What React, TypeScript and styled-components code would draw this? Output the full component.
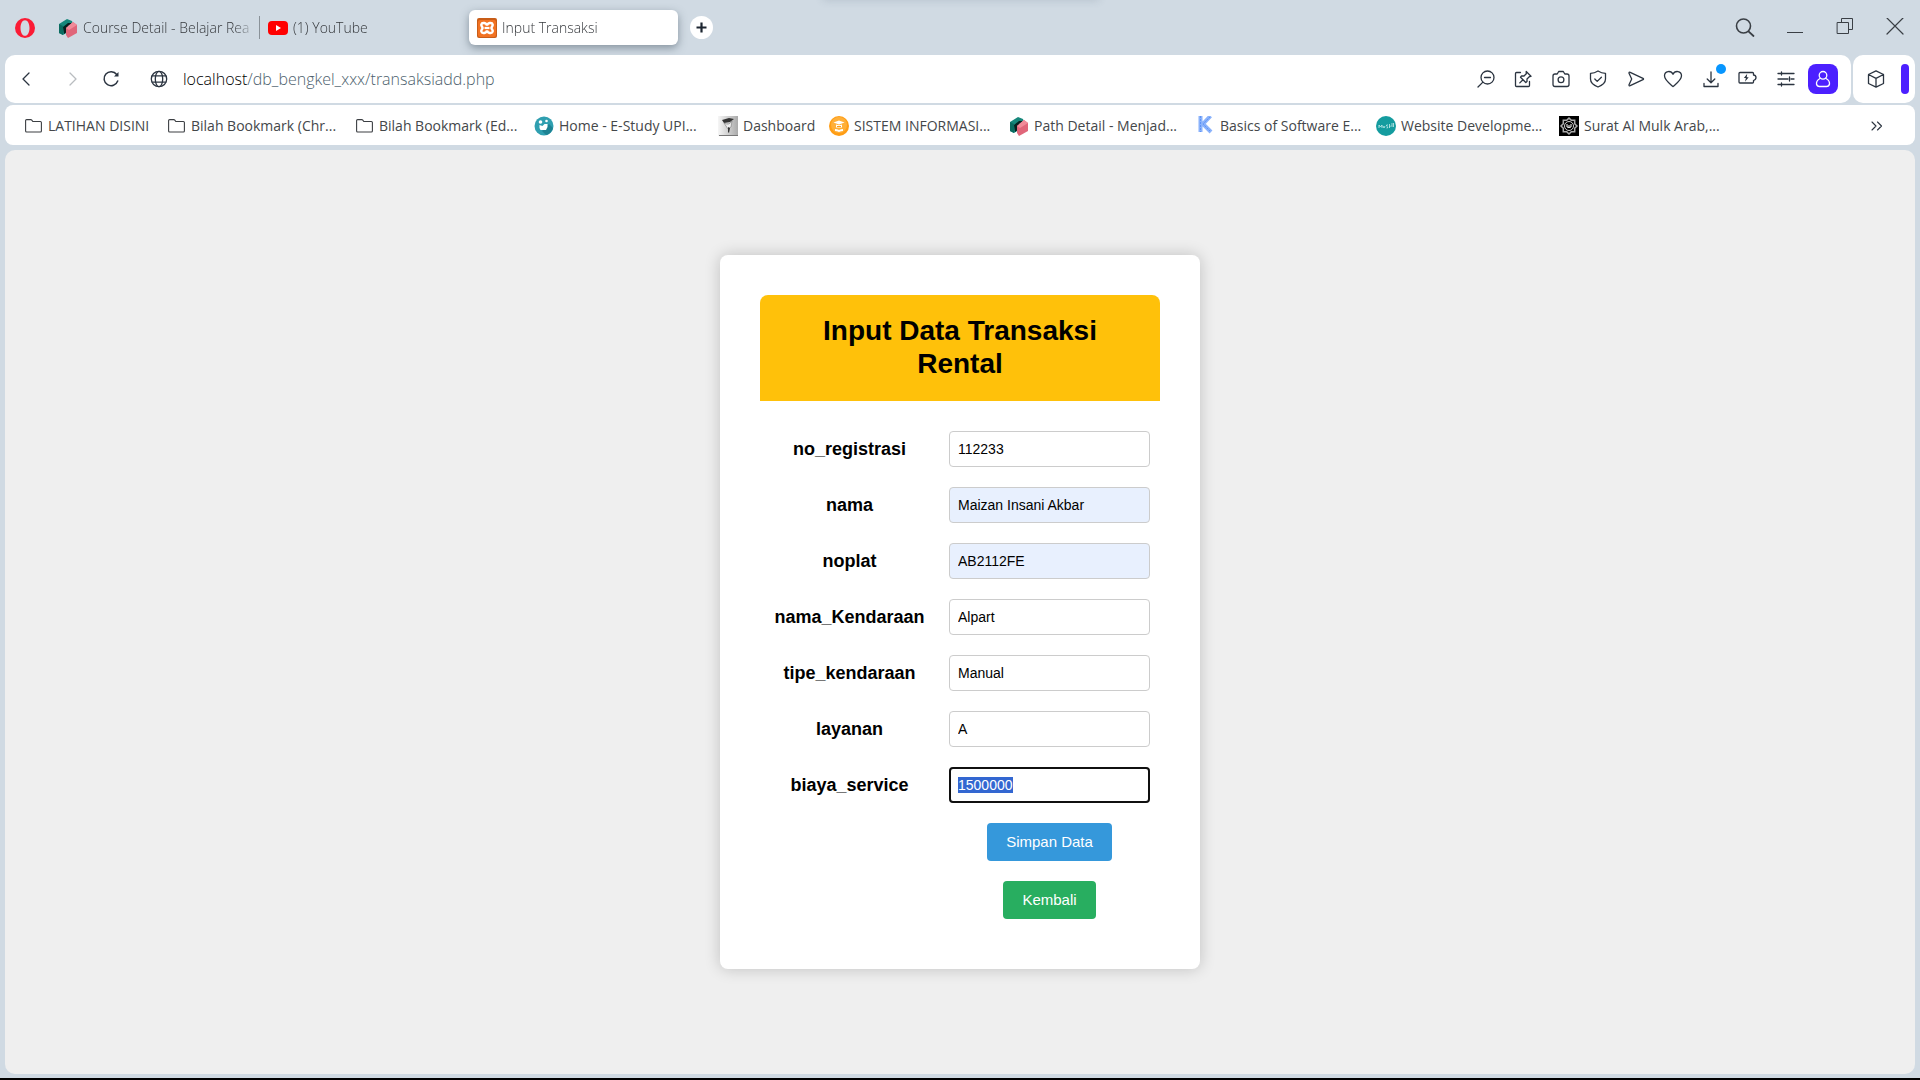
import React, { useEffect, useRef } from "react";
import styled, { createGlobalStyle, css } from "styled-components";

const uiFont = `"Open Sans", "Noto Sans", sans-serif`;
const pageFont = `"Liberation Sans", Arial, sans-serif`;

const GlobalStyle = createGlobalStyle`
  *, *::before, *::after { box-sizing: border-box; }
  body { margin: 0; background: #d0dae3; }
  button, input { font: inherit; }
  svg { display: block; flex: none; }
`;

const Window = styled.div`
  display: flex;
  flex-direction: column;
  min-height: 100vh;
  background: #d0dae3;
  border-bottom: 2px solid #000;
  font-family: ${uiFont};
  font-size: 14px;
  font-weight: 300;
  line-height: 20px;
  color: #24272a;
`;

const TabStrip = styled.header`
  position: relative;
  display: flex;
  align-items: center;
  height: 55px;
  padding-left: 15px;
  overflow: hidden;
`;

const TopShadow = styled.div`
  position: absolute;
  top: -10px;
  left: 50%;
  width: 276px;
  height: 10px;
  margin-left: -137px;
  box-shadow: 0 0 8px rgba(70, 90, 110, 0.2);
`;

const plainButton = css`
  display: flex;
  align-items: center;
  justify-content: center;
  padding: 0;
  border: 0;
  background: none;
  color: #2b3440;
`;

const MenuButton = styled.button`
  ${plainButton}
  width: 20px;
  height: 20px;
  margin-right: 15px;
`;

const Tabs = styled.nav`
  display: flex;
  align-items: center;
`;

const Tab = styled.button<{ $active?: boolean }>`
  ${plainButton}
  justify-content: flex-start;
  gap: 5px;
  width: 209px;
  height: 35px;
  padding: 0 3px 0 8px;
  border-radius: 6px;
  color: #35383c;
  text-align: left;
  white-space: nowrap;
  ${(p) =>
    p.$active &&
    css`
      background: #fff;
      box-shadow: 0 3px 8px rgba(60, 75, 90, 0.5);
    `}
`;

const TabTitle = styled.span`
  flex: 1;
  min-width: 0;
  overflow: hidden;
  mask-image: linear-gradient(to right, #000 calc(100% - 22px), transparent);
`;

const TabDivider = styled.span`
  width: 1px;
  height: 23px;
  background: #8a9299;
`;

const NewTab = styled.button`
  ${plainButton}
  width: 23px;
  height: 23px;
  margin-left: 12px;
  border-radius: 50%;
  background: #fff;
`;

const WindowControls = styled.div`
  display: flex;
  margin-left: auto;
`;

const WindowButton = styled.button`
  ${plainButton}
  width: 50px;
  height: 40px;
  color: #3a3f45;
`;

const BarRow = styled.div`
  display: flex;
  gap: 2px;
  padding: 0 5px;
`;

const AddressBar = styled.div`
  flex: 1;
  display: flex;
  align-items: center;
  height: 48px;
  padding-right: 9px;
  border-radius: 10px;
  background: #fff;
`;

const NavButton = styled.button<{ $width: number }>`
  ${plainButton}
  width: ${(p) => p.$width}px;
  height: 30px;
  &:disabled { color: #b9bcc0; }
`;

const SiteButton = styled(NavButton)`
  margin: 0 12px 0 24px;
`;

const Url = styled.div`
  flex: 1;
  font-size: 16px;
  outline: none;
  color: #4d5f6d;
  b { color: #000; font-weight: 300; }
`;

const Tools = styled.div`
  display: grid;
  grid-template-columns: repeat(10, 1fr);
  align-items: center;
  justify-items: center;
  width: 375px;
`;

const ToolButton = styled.button<{ $filled?: boolean }>`
  ${plainButton}
  position: relative;
  width: 30px;
  height: 30px;
  ${(p) =>
    p.$filled &&
    css`
      border-radius: 8px;
      background: #4c20ff;
      color: #fff;
    `}
`;

const Dot = styled.span`
  position: absolute;
  top: 0;
  right: 0;
  width: 10px;
  height: 10px;
  border-radius: 50%;
  background: #0796ff;
`;

const SidePanel = styled.div`
  display: flex;
  align-items: center;
  justify-content: space-between;
  width: 62px;
  height: 48px;
  padding: 0 6px 0 8px;
  border-radius: 10px;
  background: #fff;
`;

const PanelHandle = styled.button`
  width: 8px;
  height: 30px;
  padding: 0;
  border: 0;
  border-radius: 4px;
  background: #4c20ff;
`;

const Bookmarks = styled.nav`
  display: flex;
  align-items: center;
  height: 40px;
  margin: 2px 5px 5px;
  padding: 1px 28px 0 20px;
  border-radius: 8px;
  background: #fff;
`;

const Bookmark = styled.a<{ $width: number }>`
  display: flex;
  align-items: center;
  gap: 5px;
  width: ${(p) => p.$width}px;
  color: #44474a;
  font-weight: 400;
  text-decoration: none;
  white-space: nowrap;
`;

const MoreButton = styled.button`
  ${plainButton}
  width: 20px;
  height: 30px;
  margin-left: auto;
`;

const Viewport = styled.main`
  flex: 1;
  display: flex;
  align-items: center;
  justify-content: center;
  margin: 0 5px 4px;
  padding: 20px;
  border-radius: 10px;
  background: #efefef;
  font-family: ${pageFont};
  font-weight: 400;
  color: #000;
`;

const Card = styled.form`
  width: 100%;
  max-width: 480px;
  padding: 40px;
  border-radius: 8px;
  background: #fff;
  box-shadow: 0 0 16px rgba(0, 0, 0, 0.2);
`;

const CardTitle = styled.h1`
  margin: 0 0 20px;
  padding: 19px 20px 21px;
  border-radius: 8px 8px 0 0;
  background: #ffc10a;
  font-size: 28px;
  line-height: 33px;
  text-align: center;
`;

const Field = styled.div`
  display: grid;
  grid-template-columns: 179px 1fr;
  align-items: center;
  padding: 10px 0;
`;

const FieldLabel = styled.label`
  font-size: 18px;
  font-weight: 700;
  text-align: center;
`;

const FieldInput = styled.input<{ $filled?: boolean }>`
  width: 100%;
  height: 36px;
  padding: 8px;
  border: 1px solid #ccc;
  border-radius: 4px;
  background: ${(p) => (p.$filled ? "#e8f0fe" : "#fff")};
  font-size: 14px;
  line-height: 18px;
  color: #000;
  &:focus {
    outline: 2px solid #101010;
    outline-offset: -2px;
  }
  &::selection {
    background: #3367d1;
    color: #fff;
  }
`;

const FieldCell = styled.div`
  grid-column: 2;
  display: flex;
  justify-content: center;
  padding: 0 10px;
`;

const ActionButton = styled.button<{ $color: string }>`
  height: 38px;
  padding: 0 19px;
  border: 0;
  border-radius: 4px;
  background: ${(p) => p.$color};
  font-size: 15px;
  color: #fff;
`;

type IconProps = { size?: number; children: React.ReactNode };

const Icon = ({ size = 20, children }: IconProps) => (
  <svg
    width={size}
    height={size}
    viewBox="0 0 20 20"
    fill="none"
    stroke="currentColor"
    strokeWidth="1.3"
    strokeLinecap="round"
    strokeLinejoin="round"
    aria-hidden="true"
  >
    {children}
  </svg>
);

const OperaIcon = () => (
  <svg width="20" height="20" viewBox="0 0 20 20" aria-hidden="true">
    <path fill="#fb1b35" fillRule="evenodd" d="M10 0a10 10 0 1 0 0 20 10 10 0 0 0 0-20Zm0 2.200c2.800 0 4.500 3.500 4.500 7.800s-1.700 7.800-4.500 7.800S5.500 14.300 5.500 10 7.200 2.200 10 2.200Z" />
  </svg>
);

const DicodingIcon = () => (
  <svg width="20" height="20" viewBox="0 0 20 20" aria-hidden="true">
    <path fill="#16877b" d="M9 1 1 6v9l4 2 5-3V9l5-3-1-3Z" />
    <path fill="#0a6b60" d="m1 6 4 2v9l-4-2Z" />
    <path fill="#06201f" d="m5 9 5-4 4 0-4 3v5l-4 3Z" />
    <path fill="#e0667a" d="m15 4 4 3v8l-9 5-2-3V10Z" />
    <path fill="#f08b99" d="m15 4 4 3-8 5-3-2Z" />
  </svg>
);

const YouTubeIcon = () => (
  <svg width="20" height="20" viewBox="0 0 20 20" aria-hidden="true">
    <rect y="3" width="20" height="14" rx="4" fill="#f00" />
    <path d="m8 7 5 3-5 3Z" fill="#fff" />
  </svg>
);

const XamppIcon = () => (
  <svg width="20" height="20" viewBox="0 0 20 20" aria-hidden="true">
    <rect width="20" height="20" rx="2" fill="#c85d18" />
    <rect x="1" y="2" width="18" height="17" rx="2" fill="#f27222" />
    <path
      d="M10 7.500C9.500 4.700 5 4 4.300 6.500 4 8 5.600 9 5.600 10S3.800 12 4.300 13.500C5 16 9.500 15.300 10 12.500c.5 2.800 5 3.500 5.700 1 .5-1.500-1.300-2.500-1.300-3.500s1.600-2 1.300-3.500C15 4 10.500 4.700 10 7.500Z"
      fill="none"
      stroke="#fff"
      strokeWidth="2.400"
    />
    <path d="M7.500 10h5" stroke="#fff" strokeWidth="2.200" />
  </svg>
);

const FolderIcon = () => (
  <svg width="18" height="16" viewBox="0 0 18 16" fill="none" stroke="#3c3f43" strokeWidth="1.100" aria-hidden="true">
    <path d="M.6 13V2.600q0-1 1-1h4.200q.6 0 1 .5l1 1.400h7.600q1 0 1 1V13q0 1-1 1H1.600q-1 0-1-1Z" />
  </svg>
);

const StudyIcon = () => (
  <svg width="20" height="20" viewBox="0 0 20 20" aria-hidden="true">
    <circle cx="10" cy="10" r="9.500" fill="#2f9fb0" />
    <path d="m8 15 7-7 4 4q-2 6-7 7Z" fill="#1d8293" />
    <circle cx="6.500" cy="6" r="1.800" fill="#fff" />
    <circle cx="12.500" cy="5" r="1.300" fill="#fff" />
    <path d="m5.500 9 3 1 2-2h3v3l-1.500 3H6.500l-1-2Z" fill="#fff" />
  </svg>
);

const GraduateIcon = () => (
  <svg width="20" height="20" viewBox="0 0 20 20" aria-hidden="true">
    <defs>
      <linearGradient id="graduateShade" x2="1">
        <stop stopColor="#f6f6f6" />
        <stop offset="1" stopColor="#aaa" />
      </linearGradient>
    </defs>
    <rect width="20" height="20" fill="url(#graduateShade)" />
    <path d="m4 4 7-2 5 1-4 3-6 1Z" fill="#333" />
    <path d="M6 7q5 3 8-2l-1 6-3 2Z" fill="#eee" stroke="#777" strokeWidth=".6" />
    <path d="m10 11 2 1-1 5-1-1Z" fill="#333" />
    <path d="M1 19.500h19" stroke="#777" />
  </svg>
);

const SystemIcon = () => (
  <svg width="20" height="20" viewBox="0 0 20 20" aria-hidden="true">
    <circle cx="10" cy="10" r="10" fill="#ff9d14" />
    <circle cx="10" cy="9" r="8" fill="#ffb03a" />
    <path d="m4.500 6.500 5.500-2 5.500 2-5.500 2Z" fill="#fff" />
    <path d="M7 8.500q3 1.500 6 0v3H7ZM6 13q2 0 4 1 2-1 4-1v2q-2 0-4 1-2-1-4-1Z" fill="#fff" />
    <path d="M8 10.500h4" stroke="#ff9d14" />
  </svg>
);

const KIcon = () => (
  <svg width="20" height="20" viewBox="0 0 20 20" fill="none" aria-hidden="true">
    <path d="M5.500 0v16M15.500 0 8 8l8 8" stroke="#8ab2fb" strokeWidth="4" />
    <path d="M5.500 0v16M15 1 8 8l7 7" stroke="#5f94f5" strokeWidth="1" strokeDasharray="2 1" />
  </svg>
);

const SkillIcon = () => (
  <svg width="20" height="20" viewBox="0 0 20 20" aria-hidden="true">
    <circle cx="10" cy="10" r="10" fill="#149c9f" />
    <path d="M3 12V9l1.500 2L6 9v3m1-2 1 2 1-2m3-1q-2-.5-1.500 1 2 1 1 2h-1m3-4v4m0-1 1.500-1.500m1-2.500v4m1.500-4v4" fill="none" stroke="#c7ecec" strokeWidth=".8" />
  </svg>
);

const QuranIcon = () => (
  <svg width="20" height="20" viewBox="0 0 20 20" fill="none" aria-hidden="true">
    <rect width="20" height="20" fill="#000" />
    <path d="m10 2 2.300 2.300h3.400v3.400L18 10l-2.300 2.300v3.400h-3.400L10 18l-2.300-2.300H4.300v-3.400L2 10l2.300-2.300V4.300h3.400Z" stroke="#aaa" strokeWidth="1.500" />
    <circle cx="10" cy="10" r="4.500" stroke="#ccc" />
    <path d="M8 8v3q2 1 4 0V8m-2 1v2" stroke="#fff" />
  </svg>
);

const bookmarks = [
  { title: "LATIHAN DISINI", icon: <FolderIcon />, width: 143 },
  { title: "Bilah Bookmark (Chr...", icon: <FolderIcon />, width: 188 },
  { title: "Bilah Bookmark (Ed...", icon: <FolderIcon />, width: 178 },
  { title: "Home - E-Study UPI...", icon: <StudyIcon />, width: 184 },
  { title: "Dashboard", icon: <GraduateIcon />, width: 111 },
  { title: "SISTEM INFORMASI...", icon: <SystemIcon />, width: 180 },
  { title: "Path Detail - Menjad...", icon: <DicodingIcon />, width: 186 },
  { title: "Basics of Software E...", icon: <KIcon />, width: 181 },
  { title: "Website Developme...", icon: <SkillIcon />, width: 183 },
  { title: "Surat Al Mulk Arab,...", icon: <QuranIcon />, width: 180 },
];

const tools = [
  {
    label: "Zoom",
    icon: (
      <Icon>
        <circle cx="11.500" cy="8.500" r="6.500" />
        <path d="M6.900 13.100 2 18M8.500 8.500h6" />
      </Icon>
    ),
  },
  {
    label: "Pinboards",
    icon: (
      <Icon>
        <path d="M7.500 3.500H3.500q-1 0-1 1v12q0 1 1 1h12q1 0 1-1V12.500" />
        <path d="m13.200 2.500 4.800 4.800-1.700.4-2.300 2.300v2.500l-1.200 1L7.500 8.200l1-1.200H11l2.300-2.300ZM10 10.700l-3.200 3.200" />
      </Icon>
    ),
  },
  {
    label: "Snapshot",
    icon: (
      <Icon>
        <path d="M4 5h2.200l1.500-2.500h4.600L13.800 5H16q2 0 2 2v8.500q0 2-2 2H4q-2 0-2-2V7q0-2 2-2Z" />
        <circle cx="10" cy="10.800" r="2.900" />
      </Icon>
    ),
  },
  {
    label: "Protection",
    icon: (
      <Icon>
        <path d="M10 2q3.500 2.300 7.500 2.300V10q0 5-7.500 8-7.500-3-7.500-8V4.300Q6.500 4.300 10 2ZM6.800 10l2.400 2.400 4.200-4.200" />
      </Icon>
    ),
  },
  {
    label: "Send",
    icon: (
      <Icon>
        <path d="M4.200 3.300 17 9.300q1.100.7 0 1.400L4.200 16.700q-1.400.5-1.200-1L5.700 10 3 4.300q-.2-1.500 1.200-1Z" />
      </Icon>
    ),
  },
  {
    label: "Favourite",
    icon: (
      <Icon>
        <path d="M10 17.500C6 14 1.500 11 1.500 6.800c0-5 6.500-5.800 8.500-1.500 2-4.300 8.500-3.500 8.500 1.500 0 4.200-4.500 7.200-8.500 10.700Z" />
      </Icon>
    ),
  },
  {
    label: "Downloads",
    dot: true,
    icon: (
      <Icon>
        <path d="M10 3v10.500M6.200 10l3.800 3.700 3.800-3.700M3 14.500v3h14v-3" />
      </Icon>
    ),
  },
  {
    label: "Battery saver",
    icon: (
      <Icon>
        <path d="M2 3.500h12.500q1 0 1 1V6q2.500.3 2.500 2.500T15.500 11.500V13q0 1-1 1H2q-1 0-1-1V4.500q0-1 1-1Z" />
        <path d="M9.200 4.700 5.900 9h2l-.9 3.700 3.700-4.500H8.700Z" fill="currentColor" stroke="none" />
      </Icon>
    ),
  },
  {
    label: "Easy setup",
    icon: (
      <Icon>
        <path d="M2 4.500h16M2 10h10m3 0h3M2 15.500h16M5.500 3v3M13.500 8v4M5.500 14v3" />
      </Icon>
    ),
  },
  {
    label: "Profile",
    filled: true,
    icon: (
      <Icon>
        <circle cx="10" cy="6.300" r="3.800" />
        <path d="M7 9.500q-3.800 2-3.500 5.500.5 2.500 3 2.500h7q2.500 0 3-2.500.3-3.500-3.500-5.500" />
      </Icon>
    ),
  },
];

const fields = [
  { name: "no_registrasi", value: "112233" },
  { name: "nama", value: "Maizan Insani Akbar", filled: true },
  { name: "noplat", value: "AB2112FE", filled: true },
  { name: "nama_Kendaraan", value: "Alpart" },
  { name: "tipe_kendaraan", value: "Manual" },
  { name: "layanan", value: "A" },
  { name: "biaya_service", value: "1500000" },
];

export default function App() {
  const lastField = useRef<HTMLInputElement>(null);

  useEffect(() => {
    lastField.current?.focus();
    lastField.current?.select();
  }, []);

  return (
    <>
      <GlobalStyle />
      <Window>
        <TabStrip>
          <TopShadow />
          <MenuButton type="button" aria-label="Menu">
            <OperaIcon />
          </MenuButton>
          <Tabs aria-label="Tabs">
            <Tab type="button">
              <DicodingIcon />
              <TabTitle>Course Detail - Belajar Rea</TabTitle>
            </Tab>
            <TabDivider />
            <Tab type="button">
              <YouTubeIcon />
              <TabTitle>(1) YouTube</TabTitle>
            </Tab>
            <Tab type="button" $active>
              <XamppIcon />
              <TabTitle>Input Transaksi</TabTitle>
            </Tab>
          </Tabs>
          <NewTab type="button" aria-label="New tab">
            <svg width="11" height="11" viewBox="0 0 11 11" stroke="#1c2530" strokeWidth="2.200">
              <path d="M5.500.5v10M.5 5.500h10" />
            </svg>
          </NewTab>
          <WindowControls>
            <WindowButton type="button" aria-label="Search tabs">
              <Icon>
                <circle cx="8.500" cy="8" r="7" strokeWidth="1.600" />
                <path d="m13.500 13.300 5 4.700" strokeWidth="1.800" />
              </Icon>
            </WindowButton>
            <WindowButton type="button" aria-label="Minimize">
              <Icon><path d="M2 14.500h16" strokeLinecap="butt" strokeWidth="1" /></Icon>
            </WindowButton>
            <WindowButton type="button" aria-label="Restore">
              <Icon>
                <path d="M2.500 4.500h11v11h-11ZM6.500 4V.5h11v11h-4" strokeWidth="1" />
              </Icon>
            </WindowButton>
            <WindowButton type="button" aria-label="Close">
              <Icon><path d="m2 0 16 16M18 0 2 16" strokeWidth="1.200" /></Icon>
            </WindowButton>
          </WindowControls>
        </TabStrip>

        <BarRow>
          <AddressBar>
            <NavButton type="button" $width={42} aria-label="Back">
              <Icon><path d="m13 4-6 6 6 6" /></Icon>
            </NavButton>
            <NavButton type="button" $width={52} aria-label="Forward" disabled>
              <Icon><path d="m7 4 6 6-6 6" /></Icon>
            </NavButton>
            <NavButton type="button" $width={24} aria-label="Reload">
              <Icon>
                <path d="M15.700 5.500A7 7 0 1 0 16.700 12" strokeWidth="1.500" />
                <path d="M17.500 3v4.500H13Z" fill="currentColor" stroke="none" />
              </Icon>
            </NavButton>
            <SiteButton type="button" $width={24} aria-label="Site information">
              <Icon>
                <circle cx="10" cy="10" r="7.700" />
                <ellipse cx="10" cy="10" rx="3.700" ry="7.700" />
                <path d="M3.300 6.800h13.400M3.300 13.200h13.400" />
              </Icon>
            </SiteButton>
            <Url role="textbox" aria-label="Address" contentEditable suppressContentEditableWarning spellCheck={false}>
              <b>localhost</b>/db_bengkel_xxx/transaksiadd.php
            </Url>
            <Tools>
              {tools.map((tool) => (
                <ToolButton key={tool.label} type="button" aria-label={tool.label} $filled={tool.filled}>
                  {tool.icon}
                  {tool.dot && <Dot />}
                </ToolButton>
              ))}
            </Tools>
          </AddressBar>
          <SidePanel>
            <ToolButton type="button" aria-label="Extensions">
              <Icon>
                <path d="m10 1.800 7.500 3.700v9L10 18.200l-7.500-3.700v-9ZM2.500 5.500 10 9.300l7.500-3.800M10 9.300v8.900" />
              </Icon>
            </ToolButton>
            <PanelHandle type="button" aria-label="Side panel" />
          </SidePanel>
        </BarRow>

        <Bookmarks aria-label="Bookmarks">
          {bookmarks.map((b) => (
            <Bookmark key={b.title} href="#" $width={b.width}>
              {b.icon}
              {b.title}
            </Bookmark>
          ))}
          <MoreButton type="button" aria-label="More bookmarks">
            <Icon><path d="m5 6 4 4-4 4m5.500-8 4 4-4 4" strokeWidth="1.100" /></Icon>
          </MoreButton>
        </Bookmarks>

        <Viewport>
          <Card onSubmit={(e) => e.preventDefault()}>
            <CardTitle>Input Data Transaksi Rental</CardTitle>
            {fields.map((f, i) => (
              <Field key={f.name}>
                <FieldLabel htmlFor={f.name}>{f.name}</FieldLabel>
                <FieldCell>
                  <FieldInput
                    id={f.name}
                    name={f.name}
                    type="text"
                    autoComplete="off"
                    defaultValue={f.value}
                    $filled={f.filled}
                    ref={i === fields.length - 1 ? lastField : undefined}
                  />
                </FieldCell>
              </Field>
            ))}
            <Field>
              <FieldCell>
                <ActionButton type="submit" $color="#3598db">Simpan Data</ActionButton>
              </FieldCell>
            </Field>
            <Field>
              <FieldCell>
                <ActionButton type="button" $color="#28ae60">Kembali</ActionButton>
              </FieldCell>
            </Field>
          </Card>
        </Viewport>
      </Window>
    </>
  );
}
